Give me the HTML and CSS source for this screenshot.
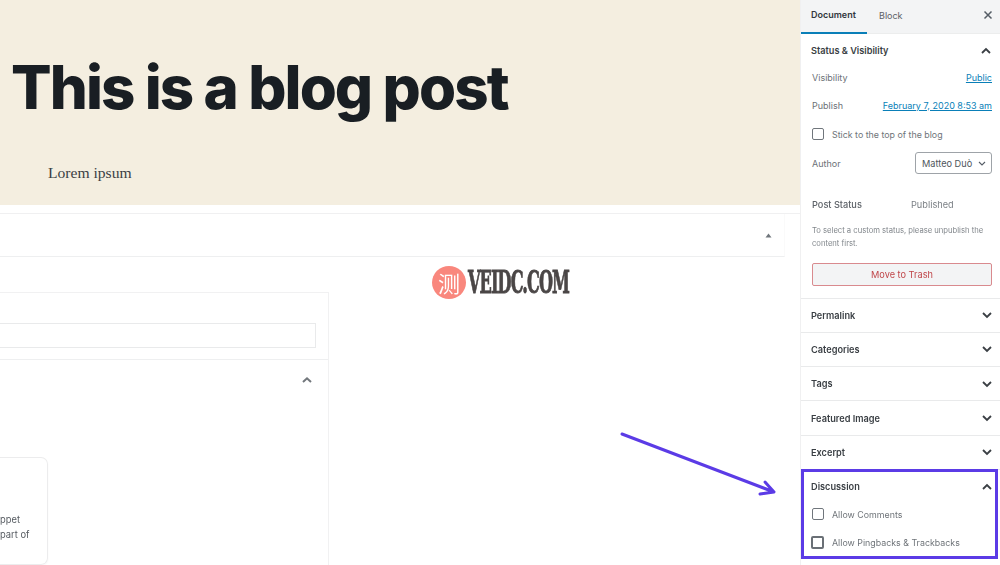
FILE: index.html
```html
<!DOCTYPE html>
<html lang="en">
<head>
<meta charset="utf-8">
<title>This is a blog post</title>
<link rel="stylesheet" href="styles.css">
</head>
<body>
<div class="app">
  <main class="main">
    <header class="hero">
      <h1 class="hero-title">This is a blog post</h1>
      <p class="hero-text">Lorem ipsum</p>
    </header>
    <section class="meta-bar">
      <div class="meta-inner">
        <svg class="tri" width="7" height="5" viewBox="0 0 7 5"><path d="M0.5 4.5L3.5 0.5L6.5 4.5Z"/></svg>
      </div>
    </section>
    <section class="card">
      <div class="card-top"><div class="field"></div></div>
      <div class="card-body">
        <div class="card-head">
          <svg class="chev-sm" width="12" height="8" viewBox="0 0 12 8"><path d="M2 6L6 2.3L10 6"/></svg>
        </div>
        <div class="notice">
          <p>ppet</p>
          <p>part of</p>
        </div>
      </div>
    </section>
  </main>

  <aside class="side">
    <nav class="tabs">
      <span class="tab tab-active">Document</span>
      <span class="tab tab-block">Block</span>
      <svg class="close" width="10" height="10" viewBox="0 0 10 10"><path d="M1.5 1.5L8.5 8.5M8.5 1.5L1.5 8.5"/></svg>
    </nav>

    <section class="panel panel-status">
      <div class="panel-head"><span>Status &amp; Visibility</span>
        <svg class="chev" width="12" height="8" viewBox="0 0 12 8"><path d="M2 6L6 2L10 6"/></svg></div>
      <div class="row row-vis"><span class="label">Visibility</span><a class="link">Public</a></div>
      <div class="row row-pub"><span class="label">Publish</span><a class="link">February 7, 2020 8:53 am</a></div>
      <label class="check check-stick"><span class="box"></span><span>Stick to the top of the blog</span></label>
      <div class="row row-author"><span class="label">Author</span>
        <div class="select"><span>Matteo Duò</span>
          <svg width="8" height="5" viewBox="0 0 8 5"><path d="M1 1L4 4L7 1"/></svg></div></div>
      <div class="status-row"><span class="status-key">Post Status</span><span class="status-val">Published</span></div>
      <p class="hint">To select a custom status, please unpublish the content first.</p>
      <button class="trash">Move to Trash</button>
    </section>

    <section class="panel panel-closed"><div class="panel-head"><span>Permalink</span><svg class="chev" width="12" height="8" viewBox="0 0 12 8"><path d="M2 2L6 6L10 2"/></svg></div></section>
    <section class="panel panel-closed"><div class="panel-head"><span>Categories</span><svg class="chev" width="12" height="8" viewBox="0 0 12 8"><path d="M2 2L6 6L10 2"/></svg></div></section>
    <section class="panel panel-closed"><div class="panel-head"><span>Tags</span><svg class="chev" width="12" height="8" viewBox="0 0 12 8"><path d="M2 2L6 6L10 2"/></svg></div></section>
    <section class="panel panel-closed"><div class="panel-head"><span>Featured Image</span><svg class="chev" width="12" height="8" viewBox="0 0 12 8"><path d="M2 2L6 6L10 2"/></svg></div></section>
    <section class="panel panel-closed"><div class="panel-head"><span>Excerpt</span><svg class="chev" width="12" height="8" viewBox="0 0 12 8"><path d="M2 2L6 6L10 2"/></svg></div></section>
    <section class="panel panel-disc">
      <div class="panel-head"><span>Discussion</span><svg class="chev" width="12" height="8" viewBox="0 0 12 8"><path d="M2 6L6 2L10 6"/></svg></div>
      <label class="check check-disc"><span class="box"></span><span>Allow Comments</span></label>
      <label class="check check-disc"><span class="box box-focus"></span><span>Allow Pingbacks &amp; Trackbacks</span></label>
    </section>
  </aside>
</div>

<div class="highlight"></div>
<svg class="arrow" width="170" height="75" viewBox="0 0 170 75">
  <path d="M2 2L154 60M145 50L154 60L140 62"/>
</svg>
<div class="mark">
  <span class="mark-badge">测</span>
  <span class="mark-text">VEIDC.COM</span>
</div>
</body>
</html>
```

FILE: styles.css
```css
* { box-sizing: border-box; }
html, body { margin: 0; height: 565px; overflow: hidden; background: #fff; }
body { position: relative; font-family: Inter, "Liberation Sans", sans-serif; color: #50565c; }
p { margin: 0; }

.app { display: flex; height: 565px; filter: blur(.35px); }

/* main column */
.main { width: 800px; flex: none; overflow: hidden; }
.hero { height: 205px; background: #f4eee0; padding: 51px 0 0 11px; }
.hero-title { margin: 0; font: 800 60px/72px Inter, "Liberation Sans", sans-serif; letter-spacing: -1.9px; color: #191e23; white-space: nowrap; }
.hero-text { margin: 40px 0 0 37px; font: 15.6px/20px "Liberation Serif", serif; color: #3b3f44; }

.meta-bar { margin-top: 8px; border-top: 1px solid #f0f0f1; }
.meta-inner { width: 785px; height: 43px; border-bottom: 1px solid #eeeff0; border-right: 1px solid #fafafa; display: flex; justify-content: flex-end; align-items: center; padding-right: 12px; }
.tri { fill: #70767c; }

.card { margin-top: 35px; width: 329px; height: 300px; border: 1px solid #f1f1f2; border-left: 0; }
.card-top { height: 67px; padding-top: 30px; border-bottom: 1px solid #eeeff0; }
.field { width: 316px; height: 25px; border: 1px solid #e9eaeb; border-left: 0; }
.card-body { padding: 16px 15px 0 0; }
.card-head { display: flex; justify-content: flex-end; }
.chev-sm { fill: none; stroke: #72777c; stroke-width: 2; }
.notice { margin-top: 73px; width: 48px; height: 108px; border: 1px solid #ececed; border-left: 0; border-radius: 0 7px 7px 0; padding-top: 55px; font-size: 9.4px; line-height: 14.5px; color: #555a60; box-shadow: 0 1px 2px rgba(0,0,0,.04); }

/* sidebar */
.side { width: 200px; flex: none; border-left: 1px solid #f0f0f1; background: #fff; }
.tabs { display: flex; height: 34px; background: #f3f4f5; border-bottom: 1px solid #eceded; align-items: stretch; }
.tab { display: flex; align-items: center; font-size: 9px; color: #5c6166; padding-bottom: 3px; }
.tab-active { width: 66px; padding-left: 10px; color: #32373c; font-weight: 600; border-bottom: 2px solid #0a7fb8; height: 34px; }
.tab-block { padding-left: 12px; }
.close { margin-left: auto; margin-right: 7px; align-self: center; margin-top: -3px; fill: none; stroke: #555d66; stroke-width: 1.5; }

.panel { border-bottom: 1px solid #e9eaeb; padding: 0 7px 0 10px; }
.panel-head { display: flex; justify-content: space-between; align-items: center; height: 33.3px; font-size: 9.2px; font-weight: 600; color: #3a3f44; }
.chev { fill: none; stroke: #3a3f44; stroke-width: 1.8; }
.panel-status { height: 264.5px; padding-right: 8px; }
.panel-closed { height: 34.3px; }
.panel-disc { border-bottom: 0; }

.row { display: flex; justify-content: space-between; align-items: center; font-size: 9px; margin-left: 1px; }
.label { color: #6c7176; }
.link { color: #0a7fb8; text-decoration: underline; }
.row-vis { height: 16px; margin-top: 2px; }
.row-pub { height: 16px; margin-top: 12px; }
.check { display: flex; align-items: center; gap: 8px; font-size: 8.85px; color: #6f7479; margin-left: 1px; }
.box { width: 12px; height: 12px; border: 1.3px solid #70767c; border-radius: 2px; background: #fff; flex: none; }
.box-focus { width: 13px; height: 13px; margin-left: -1px; border: 2px solid #6a7076; }
.check-stick { height: 14px; margin-top: 14px; }
.row-author { height: 22px; margin-top: 11px; }
.select { width: 77px; height: 22px; border: 1px solid #9ea3a8; border-radius: 3px; display: flex; align-items: center; justify-content: space-between; padding: 0 5px 0 6px; color: #50565c; font-size: 9.2px; }
.select svg { fill: none; stroke: #555d66; stroke-width: 1.1; }
.status-row { display: flex; height: 14px; margin-top: 23px; margin-left: 1px; align-items: center; font-size: 9.2px; }
.status-key { width: 99px; font-weight: 500; color: #5d6268; }
.status-val { color: #7a7f84; }
.hint { margin: 12.5px 0 0 1px; font-size: 7.65px; line-height: 13.3px; color: #82878c; }
.trash { display: block; width: 180px; height: 23px; margin: 13px 0 0 1px; padding: 0; background: #f3f4f5; border: 1px solid #d98a8e; border-radius: 2px; color: #c0474a; font: 9.2px Inter, "Liberation Sans", sans-serif; }
.check-disc { height: 14px; }
.check-disc + .check-disc { margin-top: 14.5px; }
.panel-disc .check-disc:first-of-type { margin-top: 4px; }

/* overlays */
.highlight { position: absolute; left: 801px; top: 469px; width: 197px; height: 90px; border: 3px solid #5b3be6; }
.arrow { position: absolute; left: 620px; top: 432px; fill: none; stroke: #5b3be6; stroke-width: 3; stroke-linecap: round; stroke-linejoin: round; }
.mark { position: absolute; left: 432px; top: 266px; display: flex; align-items: center; gap: 2px; height: 33px; }
.mark-badge { width: 34px; height: 33px; border-radius: 50%; background: #f9877d; color: #fff; font: 22px/33px "Noto Sans CJK SC", sans-serif; text-align: center; }
.mark-text { font: 700 27px/33px "DejaVu Serif Condensed", "DejaVu Serif", serif; color: #4a4646; letter-spacing: -1.4px; -webkit-text-stroke: .7px #4a4646; display: inline-block; transform: scale(.665, 1.15); transform-origin: left center; white-space: nowrap; }
```
